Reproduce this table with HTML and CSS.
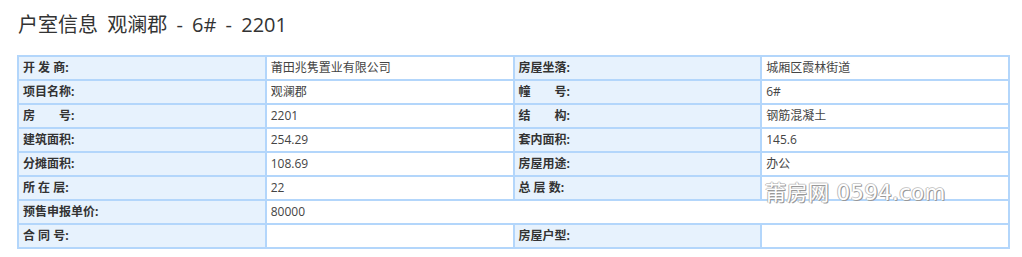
FILE: index.html
```html
<!DOCTYPE html>
<html lang="zh">
<head>
<meta charset="utf-8">
<link rel="stylesheet" href="styles.css">
</head>
<body>
<div class="page">
  <h1 class="title">户室信息 观澜郡 - 6# - 2201</h1>
  <div class="table-wrap">
    <table class="info">
      <tr><td class="lbl">开 发 商:</td><td>莆田兆隽置业有限公司</td><td class="lbl">房屋坐落:</td><td>城厢区霞林街道</td></tr>
      <tr><td class="lbl">项目名称:</td><td>观澜郡</td><td class="lbl">幢&emsp;&emsp;号:</td><td>6#</td></tr>
      <tr><td class="lbl">房&emsp;&emsp;号:</td><td>2201</td><td class="lbl">结&emsp;&emsp;构:</td><td>钢筋混凝土</td></tr>
      <tr><td class="lbl">建筑面积:</td><td>254.29</td><td class="lbl">套内面积:</td><td>145.6</td></tr>
      <tr><td class="lbl">分摊面积:</td><td>108.69</td><td class="lbl">房屋用途:</td><td>办公</td></tr>
      <tr><td class="lbl">所 在 层:</td><td>22</td><td class="lbl">总 层 数:</td><td></td></tr>
      <tr><td class="lbl">预售申报单价:</td><td colspan="3">80000</td></tr>
      <tr><td class="lbl">合 同 号:</td><td></td><td class="lbl">房屋户型:</td><td></td></tr>
    </table>
    <div class="watermark">莆房网 0594.com</div>
  </div>
</div>
</body>
</html>
```
FILE: styles.css
```css
html, body {
  margin: 0;
  padding: 0;
  background: #fff;
}
.page {
  padding: 10px 12px 0 17px;
  font-family: "Open Sans", "Noto Sans CJK SC", sans-serif;
  color: #333;
}
.title {
  margin: 0 0 15px 1px;
  font-size: 20px;
  font-weight: normal;
  line-height: 30px;
  color: #333;
  word-spacing: 4px;
}
.table-wrap {
  position: relative;
  width: 993px;
}
.info {
  width: 993px;
  border-collapse: collapse;
  table-layout: fixed;
  font-size: 12px;
}
.info td {
  border: 2px solid #b3d6fb;
  height: 20px;
  padding: 1px 4px;
  line-height: 20px;
  color: #444;
  white-space: nowrap;
}
.info td.lbl {
  background: #e7f2fd;
  font-weight: bold;
  color: #333;
}
.watermark {
  position: absolute;
  left: 748px;
  top: 121px;
  font-family: "DejaVu Sans", "Noto Sans CJK SC", sans-serif;
  font-size: 21px;
  letter-spacing: 0.5px;
  color: #fff;
  text-shadow: 1px 1px 0 #999, -1px 0 0 #bbb, 0 -1px 0 #ccc, 1px 0 0 #aaa;
  white-space: nowrap;
  pointer-events: none;
}
```
